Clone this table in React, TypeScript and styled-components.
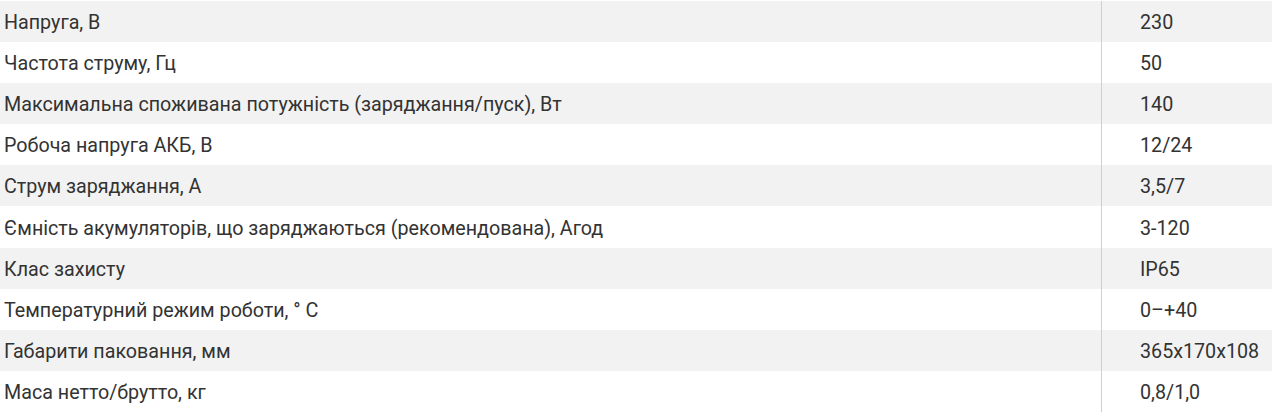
import React from 'react';
import styled, { createGlobalStyle } from 'styled-components';

const GlobalStyle = createGlobalStyle`
  html, body {
    margin: 0;
    padding: 0;
    background: #fff;
  }
  body {
    font-family: Roboto, "Noto Sans", sans-serif;
    color: #333;
  }
`;

const Table = styled.div`
  display: flex;
  flex-direction: column;
  padding-top: 1px;
  width: 1272px;
`;

const Row = styled.div<{ $shaded: boolean }>`
  display: grid;
  grid-template-columns: 1101px 1fr;
  height: 41.1px;
  background: ${(p) => (p.$shaded ? '#f2f2f2' : '#fff')};
`;

const Name = styled.div`
  display: flex;
  align-items: center;
  padding: 2px 0 0 4px;
  font-size: 19.7px;
  color: #333;
  white-space: nowrap;
`;

const Value = styled.div`
  display: flex;
  align-items: center;
  padding: 2px 0 0 38px;
  border-left: 1px solid #cfcfcf;
  font-size: 19.7px;
  color: #333;
  white-space: nowrap;
`;

const specs: [string, string][] = [
  ['Напруга, В', '230'],
  ['Частота струму, Гц', '50'],
  ['Максимальна споживана потужність (заряджання/пуск), Вт', '140'],
  ['Робоча напруга АКБ, В', '12/24'],
  ['Струм заряджання, А', '3,5/7'],
  ['Ємність акумуляторів, що заряджаються (рекомендована), Агод', '3-120'],
  ['Клас захисту', 'IP65'],
  ['Температурний режим роботи, ° С', '0–+40'],
  ['Габарити паковання, мм', '365x170x108'],
  ['Маса нетто/брутто, кг', '0,8/1,0'],
];

const App = () => {
  return (
    <>
      <GlobalStyle />
      <Table>
        {specs.map(([name, value], i) => (
          <Row key={name} $shaded={i % 2 === 0}>
            <Name>{name}</Name>
            <Value>{value}</Value>
          </Row>
        ))}
      </Table>
    </>
  );
};

export default App;
